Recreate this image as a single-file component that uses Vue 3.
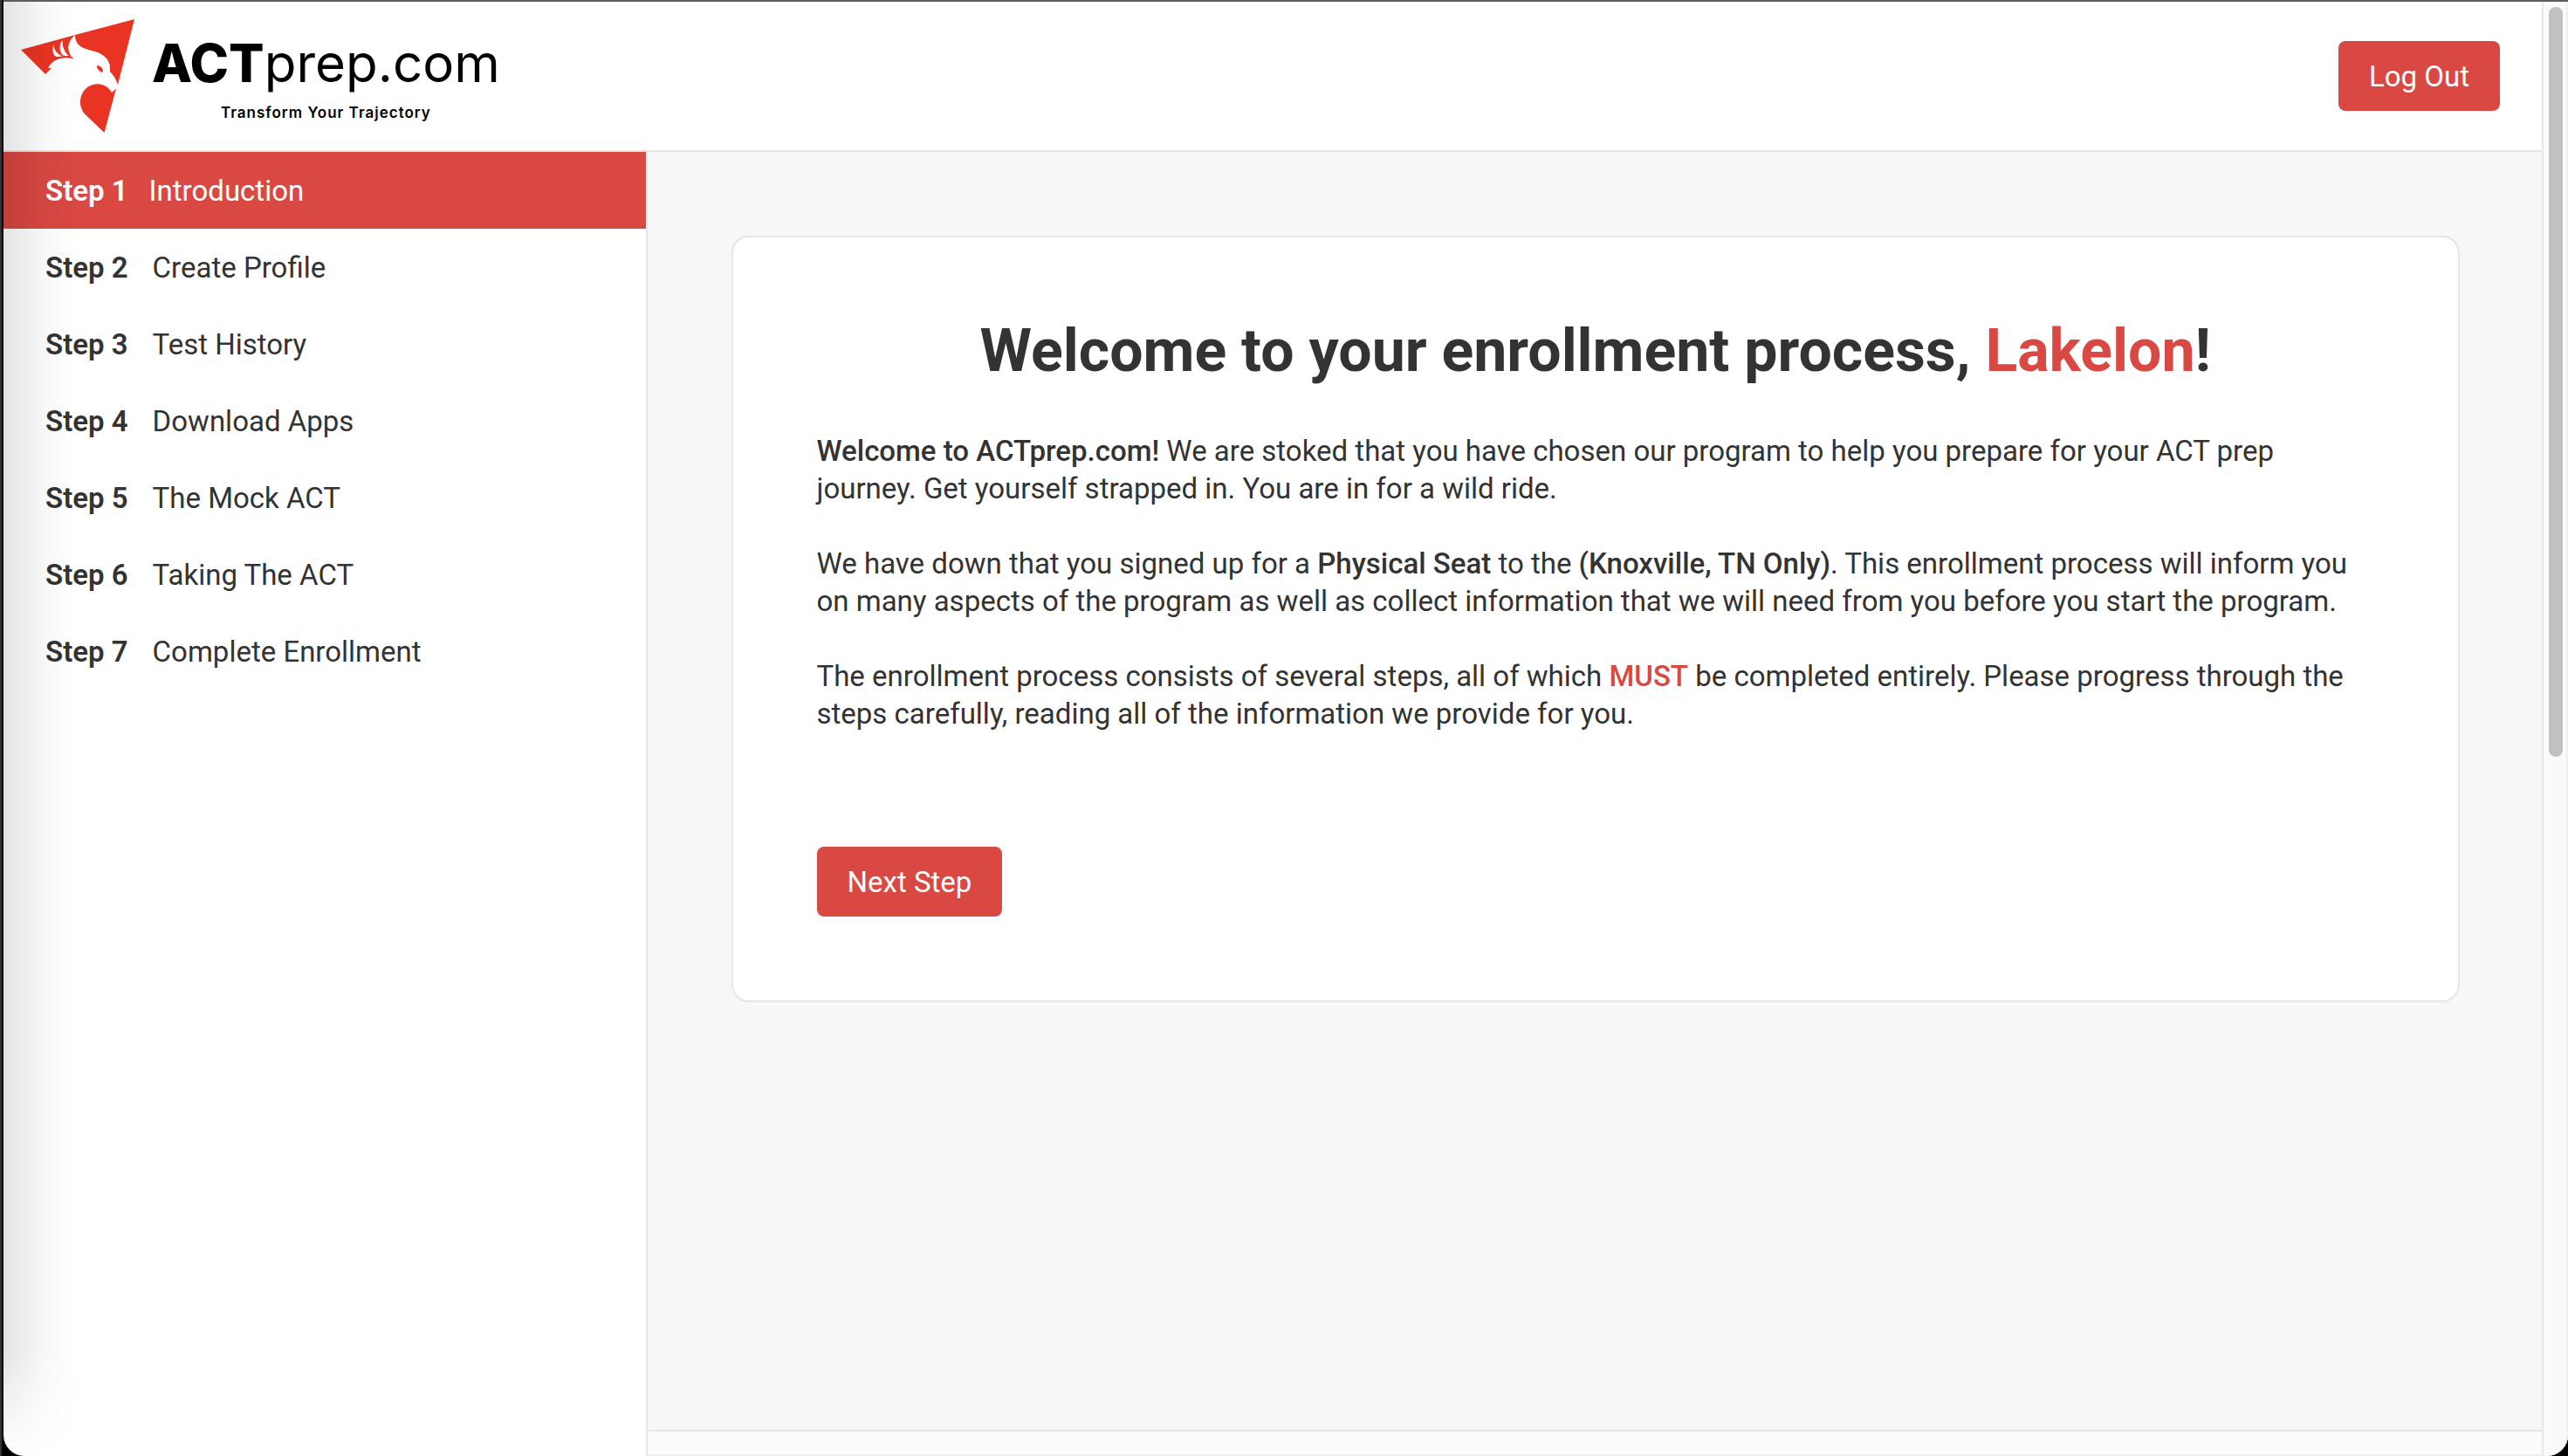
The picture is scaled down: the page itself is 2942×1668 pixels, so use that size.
<script setup>
import { ref } from 'vue'

const current = ref(1)
const steps = [
  'Introduction',
  'Create Profile',
  'Test History',
  'Download Apps',
  'The Mock ACT',
  'Taking The ACT',
  'Complete Enrollment',
]
</script>

<template>
  <div class="screen">
    <div class="window">
      <div class="page">
        <header class="topbar">
          <a class="brand" href="#">
            <svg class="brand-mark" viewBox="24 22 130 130" aria-hidden="true">
              <path fill="#e93423" d="M24 57 L86 40 C79 46 77 53 79 59 C80 63 82 66 85 67.500 C71 64 60 68 55 78 L59 78 L52 85 Z" />
              <path fill="#e93423" d="M86 40 L154 22 L135 97 C133 91 130 86 126 82 C127 70 121 64 113 60.500 C103 56 86 57 86 40 Z" />
              <path fill="#e93423" d="M111 76 C111 74 114 75 117 78 C118 80 118 82 117.500 83 C114 82 111 79 111 76 Z" />
              <path fill="#e93423" d="M133 101.500 L119.500 152 L97 130.500 C89 121 91 107 100 100 C108 94 120 95 126 103 L128 106 Z" />
              <path fill="#fff" d="M61.500 51.500 C59 58 61 65 66 65 L71.500 64.500 C66 62 62 58 61.500 51.500 Z" />
              <path fill="#fff" d="M71.500 46 C66 53 69 64 75 64 L79 64 C74 60 71.500 54 71.500 46 Z" />
            </svg>
            <span class="brand-text">
              <span class="brand-name"><b>ACT</b>prep.com</span>
              <span class="brand-tag">Transform Your Trajectory</span>
            </span>
          </a>
          <button type="button" class="btn">Log Out</button>
        </header>

        <div class="body">
          <nav class="steps" aria-label="Enrollment steps">
            <a
              v-for="(label, i) in steps"
              :key="label"
              href="#"
              class="step"
              :class="{ active: current === i + 1 }"
              @click.prevent="current = i + 1"
            ><b>Step {{ i + 1 }}</b><span>{{ label }}</span></a>
          </nav>

          <div class="content">
            <main class="main">
              <section class="card">
                <h1>Welcome to your enrollment process, <em>Lakelon</em>!</h1>
                <p>
                  <b>Welcome to ACTprep.com!</b> We are stoked that you have chosen our program to help you prepare for your ACT prep<br>
                  journey. Get yourself strapped in. You are in for a wild ride.
                </p>
                <p>
                  We have down that you signed up for a <b>Physical Seat</b> to the <b>(Knoxville, TN Only)</b>. This enrollment process will inform you<br>
                  on many aspects of the program as well as collect information that we will need from you before you start the program.
                </p>
                <p>
                  The enrollment process consists of several steps, all of which <b class="must">MUST</b> be completed entirely. Please progress through the<br>
                  steps carefully, reading all of the information we provide for you.
                </p>
                <button type="button" class="btn next">Next Step</button>
              </section>
            </main>
            <footer class="footer"></footer>
          </div>
        </div>
      </div>
      <div class="track" aria-hidden="true"><div class="thumb"></div></div>
      <div class="edge-shadow" aria-hidden="true"></div>
    </div>
  </div>
</template>

<style>
body {
  margin: 0;
  background: #000;
}
</style>

<style scoped>
.screen {
  min-height: 100vh;
  padding-left: 4px;
  box-sizing: border-box;
  display: flex;
  background: linear-gradient(90deg, #333 2px, #000 2px);
  font-family: Roboto, "Liberation Sans", sans-serif;
  font-size: 33px;
  line-height: 43px;
  color: #333;
}
.window {
  position: relative;
  flex: 1;
  display: flex;
  border-top: 2px solid #5f5b62;
  border-radius: 0 0 24px 24px;
  overflow: hidden;
  background: #fff;
}
.page {
  flex: 1;
  min-width: 0;
  display: flex;
  flex-direction: column;
}
.topbar {
  display: flex;
  align-items: center;
  justify-content: space-between;
  height: 170px;
  padding: 0 48px 0 20px;
  border-bottom: 2px solid #e6e6e6;
}
.brand {
  display: flex;
  gap: 20px;
  color: #000;
  text-decoration: none;
}
.brand-mark {
  width: 130px;
  height: 130px;
}
.brand-text {
  display: flex;
  flex-direction: column;
  align-items: center;
  padding-top: 14px;
  font-family: Inter, sans-serif;
}
.brand-name {
  font-size: 60px;
  line-height: 72px;
  font-weight: 400;
}
.brand-name b {
  font-weight: 800;
}
.brand-tag {
  font-size: 17px;
  line-height: 42px;
  font-weight: 600;
  letter-spacing: 1px;
}
.btn {
  height: 80px;
  padding: 0 35px;
  border: 0;
  border-radius: 8px;
  background: #d94843;
  color: #fff;
  font: inherit;
  cursor: pointer;
}
.body {
  flex: 1;
  display: flex;
}
.steps {
  flex: 0 0 25vw;
  display: flex;
  flex-direction: column;
  border-right: 2px solid #e6e6e6;
}
.step {
  display: flex;
  align-items: center;
  gap: 28px;
  height: 88px;
  padding: 0 48px;
  color: inherit;
  text-decoration: none;
}
.step.active {
  gap: 24px;
  background: #d94843;
  color: #fff;
}
b {
  font-weight: 500;
}
.step b {
  font-weight: 600;
}
.content {
  flex: 1;
  min-width: 0;
  display: flex;
  flex-direction: column;
  background: #f7f7f7;
}
.main {
  flex: 1;
  padding: 96px 94px 96px 96px;
}
.card {
  padding: 96px;
  border: 2px solid #e6e6e6;
  border-radius: 20px;
  background: #fff;
}
h1 {
  margin: 0 0 59px;
  font-size: 68px;
  line-height: 68px;
  font-weight: 700;
  text-align: center;
}
h1 em {
  font-style: normal;
  color: #d94843;
}
p {
  margin: 0 0 43px;
}
.must {
  color: #d94843;
}
.next {
  display: block;
  margin-top: 131px;
}
.footer {
  height: 26px;
  border-top: 2px solid #e6e6e6;
  border-bottom: 2px solid #efefef;
  background: #fbfbfb;
}
.track {
  width: 30px;
  box-sizing: border-box;
  padding: 6px 4px 0 6px;
  border-left: 2px solid #e8e8e8;
  border-right: 2px solid #f0f0f0;
  background: #fafafa;
}
.thumb {
  width: 16px;
  height: calc(52vh - 8px);
  border-radius: 8px;
  background: #c1c1c1;
}
.edge-shadow {
  position: absolute;
  inset: 0 auto 0 0;
  width: 90px;
  pointer-events: none;
  background: linear-gradient(90deg, rgba(0, 0, 0, .11), rgba(0, 0, 0, .08) 20%, rgba(0, 0, 0, .03) 50%, rgba(0, 0, 0, .01) 75%, transparent);
  mask-image: linear-gradient(to top, transparent, #000 120px);
}
</style>
